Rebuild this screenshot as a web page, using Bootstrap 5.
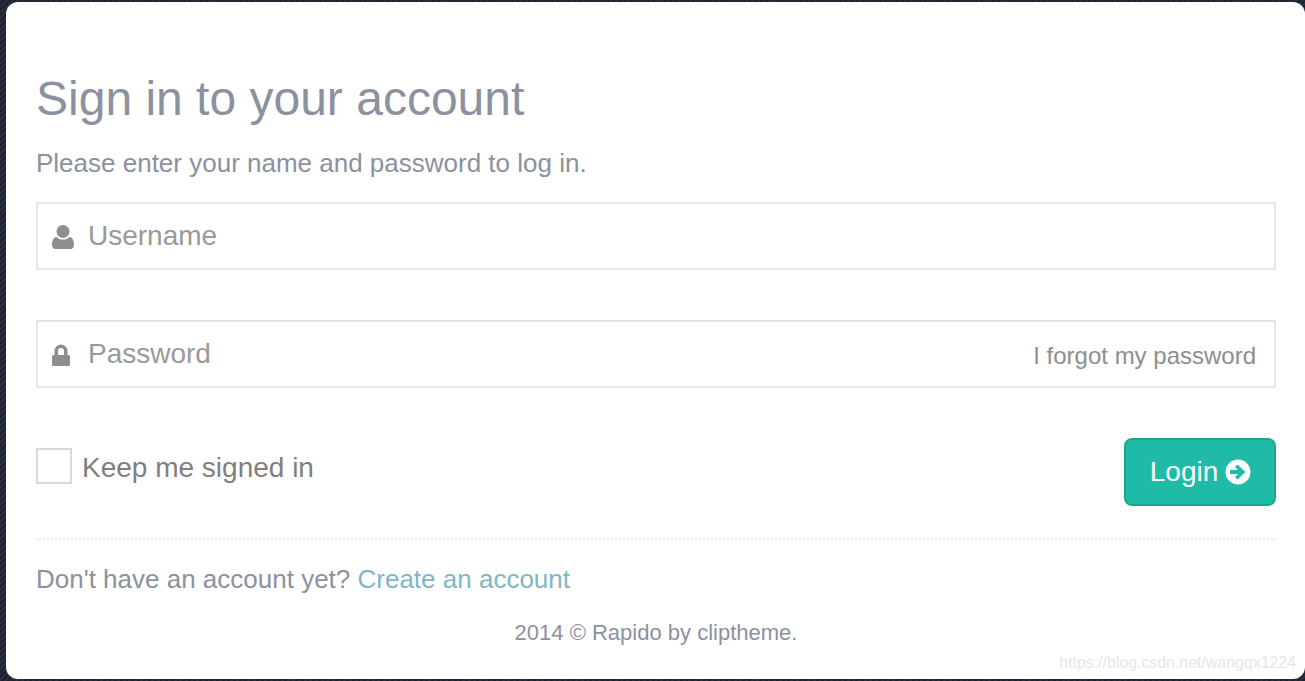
<!DOCTYPE html>
<html lang="en">

<head>
  <meta charset="UTF-8">
  <meta name="viewport" content="width=device-width, initial-scale=1.0">
  <title>Sign in to your account</title>
  <link href="https://cdn.jsdelivr.net/npm/bootstrap@5.3.0/dist/css/bootstrap.min.css" rel="stylesheet">
  <style>
    html, body {
      height: 100%;
      overflow: hidden;
    }

    body {
      background: repeating-linear-gradient(135deg, #2a2f3f 0 2px, #1d2130 2px 4px);
      font-family: "Liberation Sans", Arial, sans-serif;
      color: #8b91a0;
    }

    .page-wrap {
      height: 681px;
      padding: 2px 0 2px 6px;
    }

    .login-box {
      height: 100%;
      background: #fff;
      border-radius: 12px;
      padding: 69px 29px 0 30px;
      overflow: hidden;
    }

    .login-title {
      font-size: 48px;
      line-height: 56px;
      font-weight: 400;
      color: #8b91a0;
      margin: 0;
    }

    .login-sub {
      font-size: 26px;
      line-height: 30px;
      margin: 21px 0 24px;
    }

    .field-box {
      height: 68px;
      border: 2px solid #e5e5e5;
      padding-left: 14px;
      padding-right: 18px;
      margin-bottom: 50px;
    }

    .icon-slot {
      width: 36px;
      flex: none;
      display: flex;
      align-items: center;
      padding-top: 2px;
    }

    .icon-slot svg {
      fill: #8e8e8e;
    }

    .field-input {
      border: 0;
      outline: 0;
      padding: 0;
      background: transparent;
      font-size: 28px;
      line-height: 32px;
      min-width: 0;
      flex: 1;
      color: #555;
    }

    .field-input::placeholder {
      color: #999;
      opacity: 1;
    }

    .forgot-link {
      font-size: 24px;
      color: #8e8e8e;
      text-decoration: none;
      white-space: nowrap;
      padding-top: 3px;
    }

    .keep-wrap {
      margin-top: 10px;
    }

    .keep-box {
      width: 36px;
      height: 36px;
      border: 2px solid #d8d8d8;
      background: #fff;
      flex: none;
      margin-right: 10px;
    }

    .keep-label {
      font-size: 28px;
      color: #7f7f7f;
      line-height: 36px;
      padding-top: 2px;
    }

    .btn.btn-login {
      width: 152px;
      height: 68px;
      background: #1fbba6;
      border: 2px solid #1aa68f;
      border-radius: 8px;
      color: #fff;
      font-size: 28px;
      padding: 0 0 0 1px;
      gap: 7px;
    }

    .login-foot {
      border-top: 2px dotted #eee;
      margin-top: 32px;
      padding-top: 23px;
      font-size: 26px;
      line-height: 32px;
    }

    .login-foot a {
      color: #7fb6c6;
      text-decoration: none;
    }

    .copy-line {
      font-size: 22px;
      line-height: 28px;
      margin-top: 24px;
    }

    .watermark {
      position: absolute;
      right: 9px;
      bottom: 8px;
      font-size: 15.900px;
      line-height: 20px;
      color: #e6e6e6;
    }
  </style>
</head>

<body>
  <div class="page-wrap position-relative">
    <div class="login-box">
      <h2 class="login-title">Sign in to your account</h2>
      <p class="login-sub">Please enter your name and password to log in.</p>

      <form onsubmit="return false">
        <div class="field-box d-flex align-items-center">
          <span class="icon-slot"><svg width="22" height="24" viewBox="0 0 22 24"><circle cx="11" cy="6.500" r="6.500"/><path d="M0 20c0-4.500 1.500-7.500 4.500-8 1.500 1.600 3.800 2.600 6.500 2.600s5-1 6.500-2.600c3 .5 4.500 3.500 4.500 8 0 2.500-1.500 4-3.500 4h-15C1.500 24 0 22.500 0 20z"/></svg></span>
          <input class="field-input" type="text" placeholder="Username">
        </div>
        <div class="field-box d-flex align-items-center">
          <span class="icon-slot"><svg width="18" height="22" viewBox="0 0 18 22"><path d="M2.500 11V7a6.500 6.500 0 0 1 13 0v4h1c.8 0 1.500.7 1.500 1.500v8c0 .8-.7 1.500-1.500 1.500h-15C.7 22 0 21.300 0 20.500v-8C0 11.700.7 11 1.500 11h1zm3.500 0h6V7a3 3 0 0 0-6 0v4z"/></svg></span>
          <input class="field-input" type="password" placeholder="Password">
          <a class="forgot-link" href="#">I forgot my password</a>
        </div>

        <div class="d-flex justify-content-between align-items-start">
          <label class="d-flex align-items-start keep-wrap">
            <span class="keep-box"></span>
            <span class="keep-label">Keep me signed in</span>
          </label>
          <button class="btn btn-login d-flex align-items-center justify-content-center" type="submit">
            Login
            <svg width="26" height="26" viewBox="0 0 26 26"><circle cx="13" cy="13" r="12.500" fill="#fff"/><path d="M5 11h8l-3-3 2.500-2.500L20.500 13l-8 7.500L10 18l3-3H5z" fill="#1fbba6"/></svg>
          </button>
        </div>
      </form>

      <div class="login-foot">Don't have an account yet? <a href="#">Create an account</a></div>
      <div class="copy-line text-center">2014 © Rapido by cliptheme.</div>
    </div>
    <span class="watermark">https://blog.csdn.net/wangqx1224</span>
  </div>
  <script src="https://cdn.jsdelivr.net/npm/bootstrap@5.3.0/dist/js/bootstrap.bundle.min.js"></script>
</body>

</html>
